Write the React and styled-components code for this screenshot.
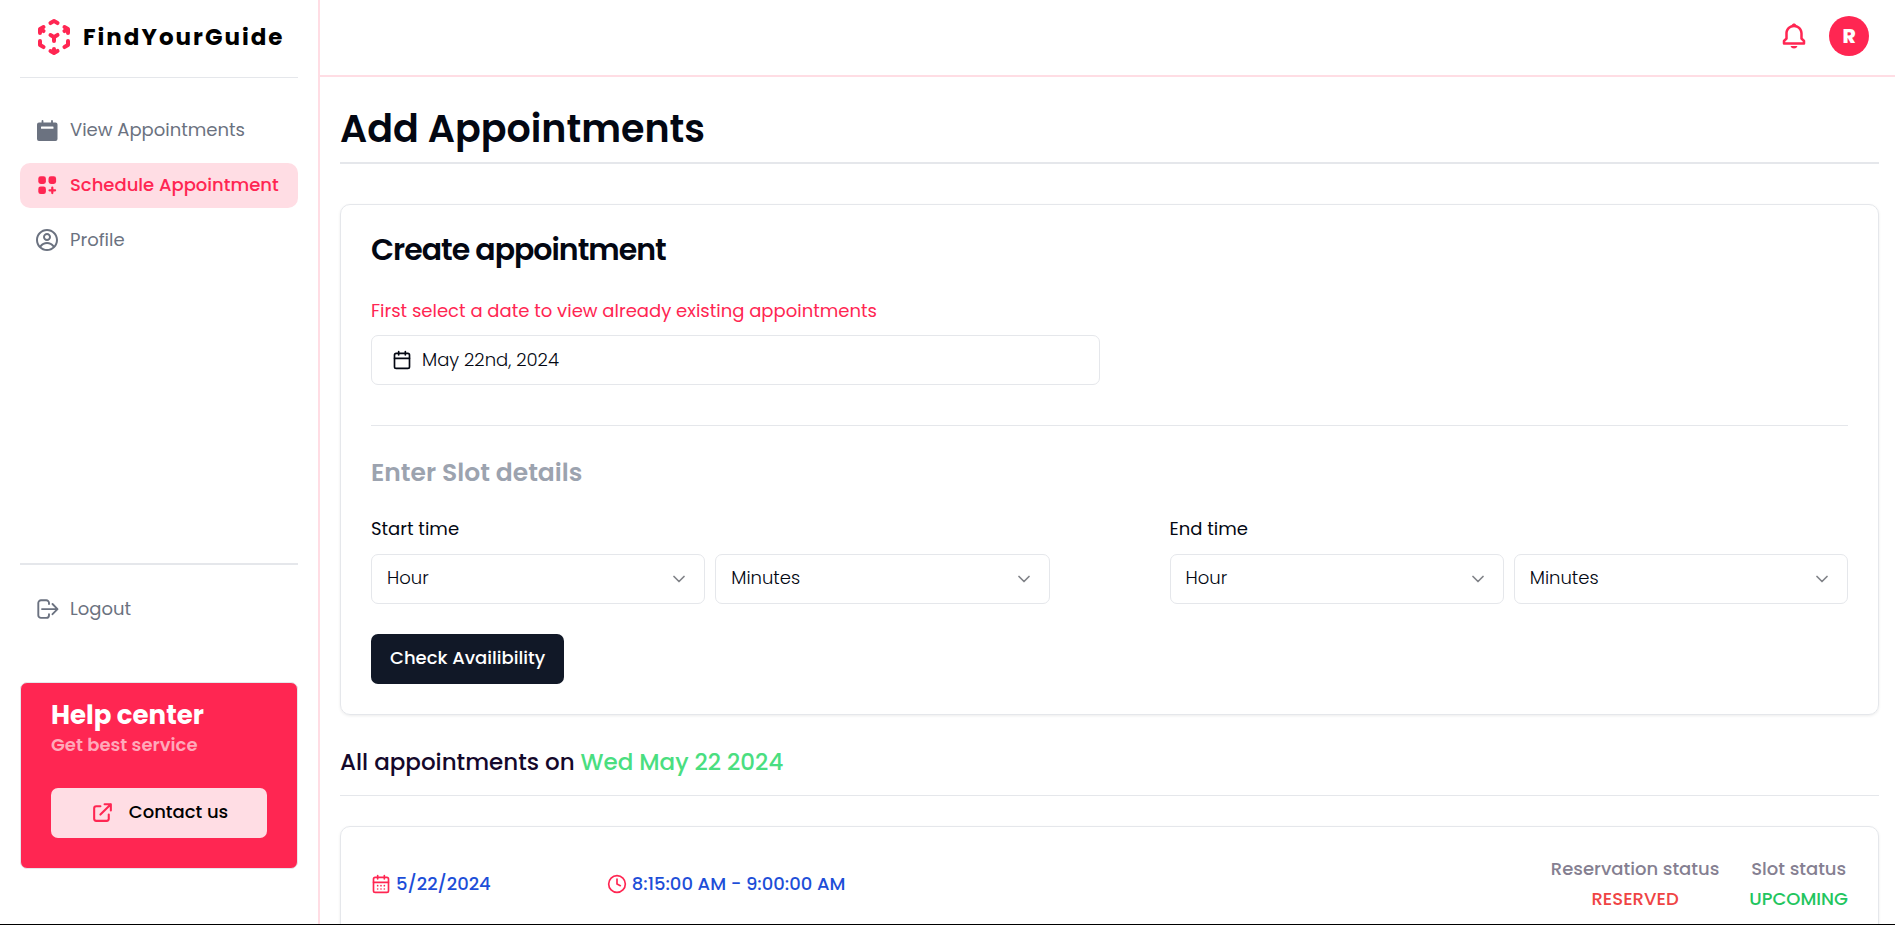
import React from "react";
import styled, { createGlobalStyle, css } from "styled-components";
import { HiCubeTransparent, HiOutlineExternalLink } from "react-icons/hi";
import { CgProfile } from "react-icons/cg";
import { BiBell } from "react-icons/bi";
import { Calendar, CalendarDays, ChevronDown, Clock } from "lucide-react";

const color = {
  brand: "#ff2652",
  blush: "#ffdde4",
  line: "#e5e7eb",
  ink: "#030712",
  muted: "#6b7280",
};

const GlobalStyle = createGlobalStyle`
  *, *::before, *::after { box-sizing: border-box; }
  body {
    margin: 0;
    background: #fff;
    color: ${color.ink};
    font-family: Poppins, Inter, "Open Sans", sans-serif;
    font-size: 18px;
    line-height: 28px;
  }
  h1, h2, h3, p { margin: 0; }
  button, select { font: inherit; color: inherit; }
  a { color: inherit; text-decoration: none; }
  svg { flex: none; display: block; }
`;

const Shell = styled.div`
  display: flex;
  height: 100vh;
  overflow: hidden;
  border-bottom: 1px solid #000;
`;

const Sidebar = styled.aside`
  flex: none;
  display: flex;
  flex-direction: column;
  width: 320px;
  padding: 0 20px 55px;
  border-right: 2px solid ${color.blush};
`;

const Brand = styled.a`
  display: flex;
  align-items: center;
  gap: 9px;
  height: 78px;
  padding: 0 0 3px 14px;
  border-bottom: 1px solid ${color.line};
  color: #000;
  font-size: 23px;
  font-weight: 700;
  letter-spacing: 2px;
  svg { color: ${color.brand}; }
`;

const Nav = styled.nav`
  display: flex;
  flex-direction: column;
  gap: 10px;
  padding-top: 30px;
`;

const itemStyle = css`
  display: flex;
  align-items: center;
  gap: 11px;
  height: 45px;
  padding: 0 15px 2px;
  border: 0;
  border-radius: 10px;
  background: transparent;
  color: ${color.muted};
  white-space: nowrap;
`;

const NavItem = styled.a`
  ${itemStyle}
  ${(p) =>
    p.$active &&
    css`
      background: ${color.blush};
      color: ${color.brand};
      font-weight: 500;
    `}
`;

const SidebarFoot = styled.div`
  margin-top: auto;
  padding: 22px 0 50px;
  border-top: 2px solid ${color.line};
`;

const LogoutButton = styled.button`
  ${itemStyle}
  width: 100%;
  cursor: pointer;
`;

const HelpCard = styled.section`
  padding: 15px 30px 30px;
  border: 1px solid ${color.line};
  border-radius: 7px;
  background: ${color.brand};
  color: #fff;
`;

const HelpTitle = styled.h2`
  font-size: 26px;
  font-weight: 700;
  line-height: 35px;
`;

const HelpText = styled.p`
  margin-bottom: 31px;
  color: #ffa9ba;
  font-weight: 600;
  line-height: 24px;
`;

const ContactButton = styled.button`
  display: flex;
  align-items: center;
  justify-content: center;
  gap: 14px;
  width: 100%;
  height: 50px;
  padding: 0 0 2px;
  border: 0;
  border-radius: 7px;
  background: ${color.blush};
  color: #000;
  font-weight: 500;
  svg { color: ${color.brand}; }
`;

const Page = styled.div`
  flex: 1;
  display: flex;
  flex-direction: column;
  min-width: 0;
`;

const TopBar = styled.header`
  flex: none;
  display: flex;
  align-items: center;
  justify-content: flex-end;
  gap: 20px;
  height: 77px;
  padding: 0 26px 4px 20px;
  border-bottom: 2px solid ${color.blush};
`;

const BellButton = styled.button`
  padding: 0;
  border: 0;
  background: none;
  color: ${color.brand};
`;

const Avatar = styled.button`
  width: 40px;
  height: 40px;
  padding: 0;
  border: 0;
  border-radius: 50%;
  background: ${color.brand};
  color: #fff;
  font-size: 20px;
  font-weight: 800;
`;

const Content = styled.main`
  flex: 1;
  min-height: 0;
  overflow-y: auto;
  scrollbar-width: none;
  padding: 20px 16px 30px 20px;
`;

const PageTitle = styled.h1`
  margin-bottom: 40px;
  padding-bottom: 1px;
  border-bottom: 2px solid ${color.line};
  font-size: 38px;
  font-weight: 600;
  line-height: 64px;
`;

const Card = styled.section`
  padding: 30px;
  border: 1px solid ${color.line};
  border-radius: 10px;
  box-shadow: 0 1px 3px rgba(0, 0, 0, 0.08);
`;

const CardTitle = styled.h2`
  margin-bottom: 32px;
  font-size: 30px;
  font-weight: 600;
  line-height: 30px;
  letter-spacing: -1px;
`;

const DateHint = styled.p`
  margin-bottom: 10px;
  color: ${color.brand};
`;

const DateButton = styled.button`
  display: flex;
  align-items: center;
  gap: 10px;
  width: 729px;
  max-width: 100%;
  height: 50px;
  padding: 0 20px;
  border: 1px solid ${color.line};
  border-radius: 7px;
  background: #fff;
  font-weight: 300;
`;

const SlotForm = styled.form`
  margin-top: 40px;
  padding-top: 30px;
  border-top: 1px solid ${color.line};
`;

const SlotTitle = styled.h3`
  margin-bottom: 25px;
  color: #9ca3af;
  font-size: 25px;
  font-weight: 600;
  line-height: 34px;
`;

const TimeRow = styled.div`
  display: grid;
  grid-template-columns: 1fr 1fr;
  column-gap: 120px;
  margin-bottom: 30px;
`;

const TimeGroup = styled.fieldset`
  min-width: 0;
  margin: 0;
  padding: 0;
  border: 0;
`;

const TimeLegend = styled.legend`
  padding: 0 0 11px;
`;

const TimeSelects = styled.div`
  display: grid;
  grid-template-columns: 1fr 1fr;
  gap: 10px;
`;

const SelectBox = styled.label`
  display: grid;
  align-items: center;
  > * { grid-area: 1 / 1; }
  svg {
    justify-self: end;
    margin-right: 16px;
    opacity: 0.5;
    pointer-events: none;
  }
`;

const Select = styled.select`
  appearance: none;
  width: 100%;
  height: 50px;
  padding: 0 15px 2px;
  border: 1px solid ${color.line};
  border-radius: 7px;
  background: #fff;
  font-weight: 300;
`;

const CheckButton = styled.button`
  display: block;
  height: 50px;
  padding: 0 19px 2px;
  border: 0;
  border-radius: 7px;
  background: #111827;
  color: #fff;
  font-weight: 500;
`;

const ListTitle = styled.h2`
  margin: 30px 0;
  padding-bottom: 16px;
  border-bottom: 1px solid ${color.line};
  color: #14082b;
  font-size: 23px;
  font-weight: 500;
  line-height: 34px;
  span { color: #4ade80; }
`;

const AppointmentCard = styled(Card)`
  display: flex;
  align-items: center;
  justify-content: space-between;
`;

const Facts = styled.div`
  display: flex;
  gap: 116px;
`;

const Fact = styled.div`
  display: flex;
  align-items: center;
  gap: 5px;
  color: #1d4ed8;
  font-weight: 500;
  svg { color: ${color.brand}; }
`;

const Statuses = styled.div`
  display: flex;
  gap: 30px;
`;

const Status = styled.div`
  display: flex;
  flex-direction: column;
  align-items: center;
  gap: 6px;
  color: #857f91;
  font-weight: 500;
  line-height: 24px;
  strong {
    color: ${(p) => p.$tone};
    font-weight: 500;
  }
`;

const AgendaIcon = () => (
  <svg width="24" height="24" viewBox="0 0 24 24" fill="none" aria-hidden="true">
    <path d="M7.5 3v3M17 3v3" stroke="currentColor" strokeWidth="1.8" strokeLinecap="round" />
    <path
      fillRule="evenodd"
      fill="currentColor"
      d="M4 4.500h16.500a2 2 0 0 1 2 2v14.500a2 2 0 0 1-2 2H4a2 2 0 0 1-2-2V6.500a2 2 0 0 1 2-2ZM6.500 8.500a.5.5 0 0 0-.5.5v1.200a.5.5 0 0 0 .5.5h11.500a.5.5 0 0 0 .5-.5V9a.5.5 0 0 0-.5-.5Z"
    />
  </svg>
);

const TilesIcon = () => (
  <svg width="24" height="24" viewBox="0 0 24 24" fill="currentColor" aria-hidden="true">
    <rect x="3.3" y="3.3" width="7.6" height="7.6" rx="2.4" />
    <rect x="13.5" y="3.3" width="7.6" height="7.6" rx="2.4" />
    <rect x="3.3" y="13.5" width="7.6" height="7.6" rx="2.4" />
    <path d="M17.3 14.5v5.6M14.5 17.3h5.6" stroke="currentColor" strokeWidth="2.2" strokeLinecap="round" />
  </svg>
);

const LogoutIcon = () => (
  <svg
    width="24"
    height="24"
    viewBox="0 0 24 24"
    fill="none"
    stroke="currentColor"
    strokeWidth="1.9"
    strokeLinecap="round"
    strokeLinejoin="round"
    aria-hidden="true"
  >
    <path d="M14 7V6a2.700 2.700 0 0 0-2.700-2.700H6A2.700 2.700 0 0 0 3.300 6v12.200A2.700 2.700 0 0 0 6 20.900h5.300a2.700 2.700 0 0 0 2.700-2.700v-1" />
    <path d="M7 12.100h15.400M17.500 7l5 5.100-5 5.100" />
  </svg>
);

const pad = (n) => String(n).padStart(2, "0");
const hours = Array.from({ length: 24 }, (_, i) => pad(i));
const minutes = ["00", "15", "30", "45"];

function Dropdown({ name, placeholder, options }) {
  return (
    <SelectBox>
      <Select name={name} aria-label={name} defaultValue="">
        <option value="">{placeholder}</option>
        {options.map((o) => (
          <option key={o} value={o}>{o}</option>
        ))}
      </Select>
      <ChevronDown size={20} />
    </SelectBox>
  );
}

function TimePicker({ label }) {
  return (
    <TimeGroup>
      <TimeLegend>{label}</TimeLegend>
      <TimeSelects>
        <Dropdown name={`${label} hour`} placeholder="Hour" options={hours} />
        <Dropdown name={`${label} minutes`} placeholder="Minutes" options={minutes} />
      </TimeSelects>
    </TimeGroup>
  );
}

export default function App() {
  return (
    <>
      <GlobalStyle />
      <Shell>
        <Sidebar>
          <Brand href="#home">
            <HiCubeTransparent size={40} />
            FindYourGuide
          </Brand>
          <Nav>
            <NavItem href="#appointments"><AgendaIcon />View Appointments</NavItem>
            <NavItem href="#schedule" $active><TilesIcon />Schedule Appointment</NavItem>
            <NavItem href="#profile"><CgProfile size={24} />Profile</NavItem>
          </Nav>
          <SidebarFoot>
            <LogoutButton type="button"><LogoutIcon />Logout</LogoutButton>
          </SidebarFoot>
          <HelpCard>
            <HelpTitle>Help center</HelpTitle>
            <HelpText>Get best service</HelpText>
            <ContactButton type="button"><HiOutlineExternalLink size={25} />Contact us</ContactButton>
          </HelpCard>
        </Sidebar>
        <Page>
          <TopBar>
            <BellButton type="button" aria-label="Notifications"><BiBell size={30} /></BellButton>
            <Avatar type="button">R</Avatar>
          </TopBar>
          <Content>
            <PageTitle>Add Appointments</PageTitle>
            <Card>
              <CardTitle>Create appointment</CardTitle>
              <DateHint>First select a date to view already existing appointments</DateHint>
              <DateButton type="button"><Calendar size={20} />May 22nd, 2024</DateButton>
              <SlotForm>
                <SlotTitle>Enter Slot details</SlotTitle>
                <TimeRow>
                  <TimePicker label="Start time" />
                  <TimePicker label="End time" />
                </TimeRow>
                <CheckButton type="button">Check Availibility</CheckButton>
              </SlotForm>
            </Card>
            <ListTitle>All appointments on <span>Wed May 22 2024</span></ListTitle>
            <AppointmentCard>
              <Facts>
                <Fact><CalendarDays size={20} />5/22/2024</Fact>
                <Fact><Clock size={20} />8:15:00 AM - 9:00:00 AM</Fact>
              </Facts>
              <Statuses>
                <Status $tone="#ef4444">Reservation status<strong>RESERVED</strong></Status>
                <Status $tone="#22c55e">Slot status<strong>UPCOMING</strong></Status>
              </Statuses>
            </AppointmentCard>
          </Content>
        </Page>
      </Shell>
    </>
  );
}
